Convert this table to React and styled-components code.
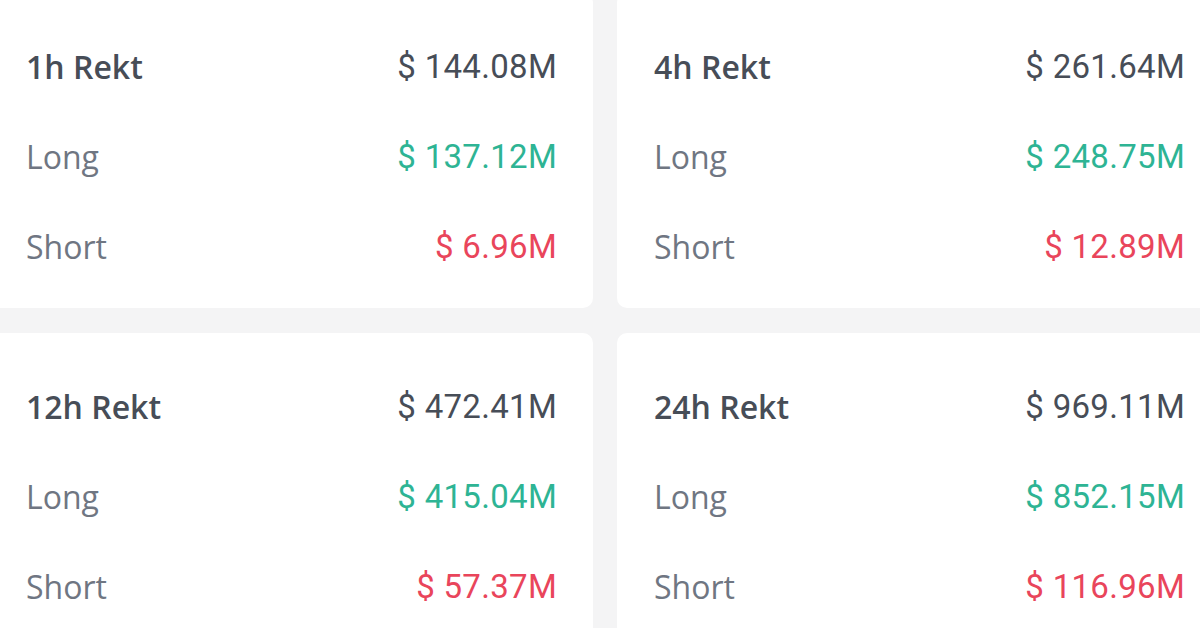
import React from "react";
import styled, { createGlobalStyle } from "styled-components";

const GlobalStyle = createGlobalStyle`
  html, body {
    margin: 0;
    padding: 0;
    background: #f4f4f5;
    overflow: hidden;
  }
`;

const Page = styled.div`
  width: 1200px;
  height: 628px;
  overflow: hidden;
  background: #f4f4f5;
`;

const Grid = styled.div`
  display: grid;
  grid-template-columns: 604px 604px;
  column-gap: 24px;
  row-gap: 25px;
  margin-left: -11px;
  margin-top: -7px;
`;

const Card = styled.div`
  background: #ffffff;
  border-radius: 10px;
  height: 315px;
  box-sizing: border-box;
  padding: 28px 36px 17px 37px;
`;

const Row = styled.div`
  height: 90px;
  display: flex;
  justify-content: space-between;
  align-items: center;
`;

const Label = styled.span`
  font-family: "Open Sans", "Noto Sans", sans-serif;
  font-size: 32px;
  font-weight: ${(p) => (p.$head ? 600 : 400)};
  color: ${(p) => (p.$head ? "#474d57" : "#6f7682")};
`;

const tones = {
  base: "#474d57",
  long: "#2eb494",
  short: "#e9455b",
};

const Value = styled.span`
  font-family: Roboto, "Liberation Sans", sans-serif;
  font-size: 33px;
  letter-spacing: 0.3px;
  color: ${(p) => tones[p.$tone]};
`;

const data = [
  { period: "1h", total: "144.08M", long: "137.12M", short: "6.96M" },
  { period: "4h", total: "261.64M", long: "248.75M", short: "12.89M" },
  { period: "12h", total: "472.41M", long: "415.04M", short: "57.37M" },
  { period: "24h", total: "969.11M", long: "852.15M", short: "116.96M" },
];

const RektCard = ({ period, total, long, short }) => (
  <Card>
    <Row>
      <Label $head>{period} Rekt</Label>
      <Value $tone="base">$ {total}</Value>
    </Row>
    <Row>
      <Label>Long</Label>
      <Value $tone="long">$ {long}</Value>
    </Row>
    <Row>
      <Label>Short</Label>
      <Value $tone="short">$ {short}</Value>
    </Row>
  </Card>
);

export default function App() {
  return (
    <>
      <GlobalStyle />
      <Page>
        <Grid>
          {data.map((d) => (
            <RektCard key={d.period} {...d} />
          ))}
        </Grid>
      </Page>
    </>
  );
}
